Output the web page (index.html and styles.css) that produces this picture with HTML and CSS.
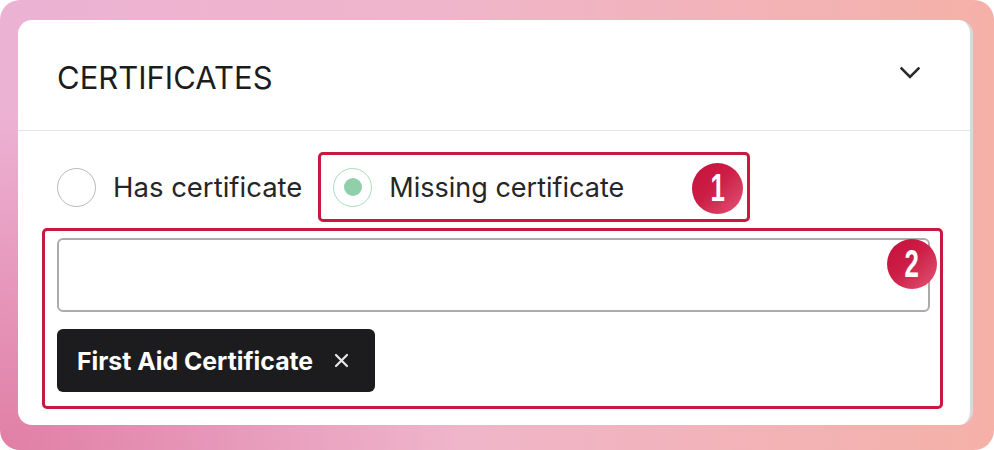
FILE: index.html
```html
<!DOCTYPE html>
<html>
<head>
<meta charset="utf-8">
<link rel="stylesheet" href="styles.css">
</head>
<body>
<div class="frame">
  <div class="card">
    <div class="card-head">
      <h2 class="title">CERTIFICATES</h2>
      <svg class="chevron" width="20" height="12" viewBox="0 0 20 12"><path d="M1.5 1.5 L10 10 L18.5 1.5" fill="none" stroke="#2b2b2b" stroke-width="2.6" stroke-linecap="square"/></svg>
    </div>
    <div class="card-body">
      <div class="radio-row">
        <label class="option">
          <span class="radio"></span>
          <span class="option-text">Has certificate</span>
        </label>
        <div class="annot annot-1">
          <label class="option">
            <span class="radio radio-on"><span class="dot"></span></span>
            <span class="option-text">Missing certificate</span>
          </label>
          <span class="badge badge-1"><span class="num">1</span></span>
        </div>
      </div>
      <div class="annot annot-2">
        <div class="input"></div>
        <div class="chip">
          <span class="chip-text">First Aid Certificate</span>
          <svg class="chip-x" width="15" height="15" viewBox="0 0 15 15"><path d="M2 2 L13 13 M13 2 L2 13" stroke="#e8e8e8" stroke-width="2.2" stroke-linecap="round"/></svg>
        </div>
        <span class="badge badge-2"><span class="num">2</span></span>
      </div>
    </div>
  </div>
</div>
</body>
</html>
```

FILE: styles.css
```css
* { box-sizing: border-box; }
html, body {
  margin: 0;
  padding: 0;
  background: #ffffff;
}
body {
  width: 994px;
  height: 450px;
  font-family: Inter, "Liberation Sans", sans-serif;
}
.frame {
  width: 994px;
  height: 450px;
  border-radius: 20px;
  padding: 20px 21px 25px 18px;
  background:
    radial-gradient(ellipse 460px 340px at 0% 100%, rgba(224, 124, 162, 0.95), rgba(224, 124, 162, 0) 100%),
    linear-gradient(90deg, #ecb2d4 0%, #efb5ca 45%, #f5b1a8 100%);
}
.card {
  width: 955px;
  height: 405px;
  background: #ffffff;
  border-radius: 14px;
  border-right: 3px solid #d9d9d9;
  overflow: hidden;
}
.card-head {
  height: 111px;
  border-bottom: 1px solid #e4e4e4;
  display: flex;
  align-items: center;
  justify-content: space-between;
  padding: 0 50px 0 39px;
}
.title {
  margin: 0;
  font-size: 31px;
  font-weight: 400;
  color: #1c1c1c;
  position: relative;
  top: 2px;
}
.chevron {
  display: block;
  position: relative;
  top: -2px;
}
.card-body {
  padding: 21px 0 0 24px;
}
.radio-row {
  display: flex;
  align-items: center;
  padding-left: 15px;
  gap: 16px;
}
.option {
  display: flex;
  align-items: center;
  gap: 17px;
}
.option-text {
  font-size: 27.5px;
  color: #262626;
}
.annot-1 .option-text {
  font-size: 27px;
}
.radio {
  width: 39px;
  height: 39px;
  border-radius: 50%;
  border: 1.5px solid #b9b9b9;
  display: flex;
  align-items: center;
  justify-content: center;
  flex: none;
}
.radio-on {
  border-color: #a9dcc1;
}
.dot {
  width: 18px;
  height: 18px;
  border-radius: 50%;
  background: #8fd0aa;
}
.annot {
  border: 3px solid #c8193f;
  border-radius: 5px;
  position: relative;
}
.annot-1 {
  height: 70px;
  width: 432px;
  display: flex;
  align-items: center;
  justify-content: space-between;
  padding: 0 4px 0 12px;
}
.badge {
  width: 51px;
  height: 51px;
  border-radius: 50%;
  background: linear-gradient(135deg, #c4103b 0%, #cc1e46 45%, #e25576 100%);
  color: #ffffff;
  display: flex;
  align-items: center;
  justify-content: center;
  flex: none;
}
.num {
  font-family: "Liberation Sans", sans-serif;
  font-weight: 700;
  font-size: 38px;
  line-height: 1;
  transform: scaleX(0.68);
  display: block;
}
.badge-1 {
  margin-top: 2px;
}
.annot-2 {
  margin-top: 6px;
  width: 901px;
  height: 181px;
  padding: 7px 10px 0 12px;
}
.input {
  height: 74px;
  border: 2px solid #ababab;
  border-radius: 6px;
  background: #ffffff;
}
.chip {
  margin-top: 17px;
  height: 63px;
  width: 318px;
  background: #1c1c1e;
  border-radius: 6px;
  display: flex;
  align-items: center;
  padding: 0 0 0 20px;
  color: #ffffff;
}
.chip-text {
  font-size: 24.8px;
  font-weight: 700;
}
.chip-x {
  margin-left: 21px;
  display: block;
}
.badge-2 {
  position: absolute;
  top: 8px;
  right: 3px;
  width: 50px;
  height: 50px;
}
```
